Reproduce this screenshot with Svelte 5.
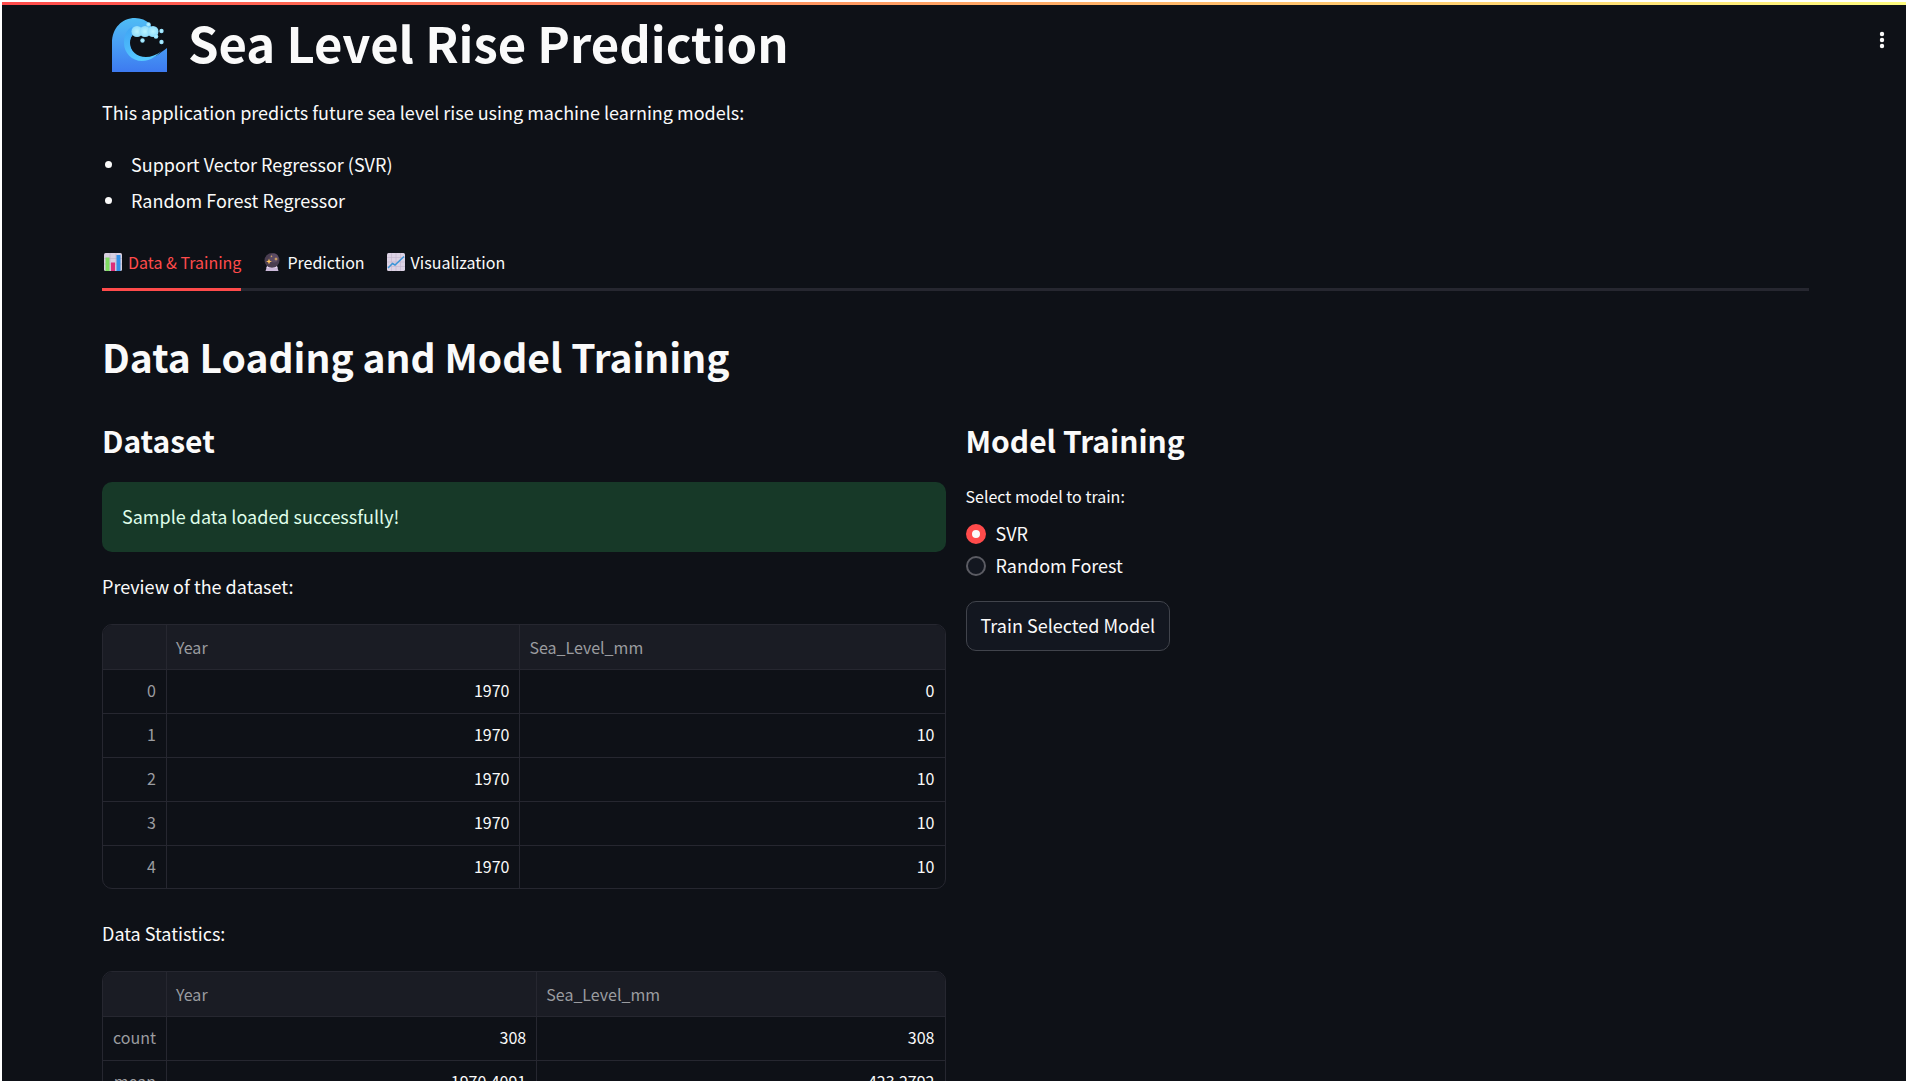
<script>
  const tabs = ['Data & Training', 'Prediction', 'Visualization'];
  let active = $state(0);
  let model = $state('SVR');
  const models = ['SVR', 'Random Forest'];
  const preview = [
    ['0', '1970', '0'],
    ['1', '1970', '10'],
    ['2', '1970', '10'],
    ['3', '1970', '10'],
    ['4', '1970', '10']
  ];
  const stats = [
    ['count', '308', '308'],
    ['mean', '1970.4091', '423.2792']
  ];
</script>

{#snippet grid(rows, kind, label)}
  <div class="frame">
    <table class={kind} aria-label={label}>
      <thead>
        <tr><th class="idx"></th><th class="year" scope="col">Year</th><th scope="col">Sea_Level_mm</th></tr>
      </thead>
      <tbody>
        {#each rows as row}
          <tr><th class="idx" scope="row">{row[0]}</th><td>{row[1]}</td><td>{row[2]}</td></tr>
        {/each}
      </tbody>
    </table>
  </div>
{/snippet}

<div class="app">
  <div class="decoration"></div>
  <button class="menu" aria-label="Main menu">
    <svg viewBox="0 0 6 18" width="6" height="18"><circle cx="3" cy="3" r="2.2" /><circle cx="3" cy="9" r="2.2" /><circle cx="3" cy="15" r="2.2" /></svg>
  </button>
  <main>
    <h1>
      <svg class="wave" viewBox="0 0 55 54" width="55" height="54" aria-hidden="true">
        <defs>
          <linearGradient id="sea" x1="0" y1="0" x2="0" y2="1"><stop offset="0" stop-color="#4fbdf5" /><stop offset="0.5" stop-color="#489df5" /><stop offset="1" stop-color="#3d7af0" /></linearGradient>
          <linearGradient id="curl" x1="0" y1="0" x2="0.3" y2="1"><stop offset="0" stop-color="#3fa4f4" /><stop offset="1" stop-color="#55c8ff" /></linearGradient>
          <radialGradient id="foam"><stop offset="0" stop-color="#b9f3ff" /><stop offset="1" stop-color="#8fdcfb" /></radialGradient>
        </defs>
        <path fill="url(#sea)" d="M0 54V25C0 10 10 0 23 0c6 0 11 2 15 6l4 9-16-2c-6 2-9 8-8 14 1 8 7 14 15 14 9 0 15-6 22-11v24z" />
        <path fill="url(#curl)" d="M20 9c-6 3-8 9-8 16 0 10 8 18 18 18 9 0 15-6 20-10-6 4-11 6-16 6-9 0-16-6-16-14 0-4 1-7 4-9z" />
        <g fill="url(#foam)">
          <circle cx="25" cy="13.500" r="5.500" /><circle cx="33" cy="13.500" r="5.500" /><circle cx="41" cy="13.500" r="5.500" />
          <circle cx="36.500" cy="6.500" r="2.200" /><circle cx="44" cy="18.500" r="2.300" /><circle cx="49.500" cy="13" r="2.200" /><circle cx="49.500" cy="24" r="2.200" /><circle cx="30.500" cy="22.500" r="2.200" />
        </g>
      </svg>
      <span>Sea Level Rise Prediction</span>
    </h1>
    <p>This application predicts future sea level rise using machine learning models:</p>
    <ul>
      <li>Support Vector Regressor (SVR)</li>
      <li>Random Forest Regressor</li>
    </ul>
    <div class="tabs" role="tablist">
      {#each tabs as tab, i}
        <button role="tab" aria-selected={active === i} class:active={active === i} onclick={() => (active = i)}>
          <svg viewBox="0 0 18 18" width="18" height="18" aria-hidden="true">
            {#if i === 0}
              <rect width="18" height="18" rx="1.500" fill="#d8cfe0" />
              <path d="M0 5.500h18M0 11h18M6 0v18M12 0v18" stroke="#bdb0c8" stroke-width=".6" />
              <rect x="1.500" y="4.500" width="4" height="13.500" fill="#7fdc62" />
              <rect x="7" y="9.500" width="4" height="8.500" fill="#dc2f78" />
              <rect x="12.500" y="2" width="4" height="16" fill="#3390e6" />
            {:else if i === 1}
              <path d="M4 13h10l1.500 5h-13z" fill="#cbb9da" />
              <circle cx="9" cy="7.500" r="7.500" fill="#493d50" />
              <circle cx="11" cy="5" r="4.500" fill="#5b4b63" />
              <path d="M4 13.500q5 2.500 10 0l.5 1.500h-11z" fill="#e4d5ef" />
              <path d="M6 5.500l.8 2.200 2.200.8-2.200.8L6 11.500l-.8-2.200L3 8.500l2.200-.8zM13 4l.5 1.400 1.500.6-1.500.6L13 8l-.5-1.400L11 6l1.500-.6zM8.500 2l.3.900.9.300-.9.300-.3.900-.3-.9-.9-.3.900-.3z" fill="#ffc45e" />
            {:else}
              <rect width="18" height="18" rx="1.500" fill="#dcd2e4" />
              <path d="M0 4.500h18M0 9h18M0 13.500h18M4.500 0v18M9 0v18M13.500 0v18" stroke="#c3b6cf" stroke-width=".6" />
              <path d="M1 15l4.500-4.500L8 12l9-8.500" fill="none" stroke="#3c95d8" stroke-width="1.500" />
            {/if}
          </svg>
          {tab}
        </button>
      {/each}
    </div>
    <h2>Data Loading and Model Training</h2>
    <div class="columns">
      <section>
        <h3>Dataset</h3>
        <div class="alert" role="status">Sample data loaded successfully!</div>
        <p class="caption">Preview of the dataset:</p>
        {@render grid(preview, 'preview', 'Preview of the dataset')}
        <p class="caption second">Data Statistics:</p>
        {@render grid(stats, 'stats', 'Data Statistics')}
      </section>
      <section>
        <h3>Model Training</h3>
        <fieldset>
          <legend>Select model to train:</legend>
          {#each models as name}
            <label><input type="radio" name="model" value={name} bind:group={model} /><span>{name}</span></label>
          {/each}
        </fieldset>
        <button class="train">Train Selected Model</button>
      </section>
    </div>
  </main>
</div>

<style>
  :global(body) { background: #fff; }
  .app {
    box-sizing: border-box;
    height: 100vh;
    border: 2px solid #fff;
    overflow: hidden;
    position: relative;
    background: #0e1117;
    color: #fafafa;
    font: 18px/32px "Noto Sans CJK SC", "Noto Sans", sans-serif;
  }
  .decoration { height: 3px; background: linear-gradient(90deg, #ff4b4b, #fffd80); }
  .menu {
    position: absolute;
    top: 29px;
    right: 21px;
    padding: 0;
    border: 0;
    background: none;
    display: flex;
  }
  .menu svg { fill: #fafafa; }
  main { padding: 0 97px 0 100px; }
  h1, h2, h3, p, ul { margin: 0; }
  h1 {
    display: flex;
    align-items: center;
    gap: 21px;
    padding: 5px 0 0 10px;
    font-size: 49px;
    line-height: 64px;
    font-weight: 700;
  }
  h1 span { padding-bottom: 6px; }
  p { padding-top: 16px; }
  ul { padding: 18px 0 0; line-height: 36px; list-style: none; }
  li { display: flex; align-items: center; gap: 19px; padding-left: 3px; }
  li::before { content: ""; width: 7px; height: 7px; border-radius: 50%; background: #fafafa; }
  .tabs {
    display: flex;
    gap: 20px;
    margin-top: 20px;
    border-bottom: 3px solid #262730;
  }
  .tabs button {
    box-sizing: border-box;
    display: flex;
    align-items: center;
    gap: 6px;
    height: 53px;
    margin-bottom: -3px;
    padding: 0 0 2px 2px;
    border: 0;
    border-bottom: 3px solid transparent;
    background: none;
    color: inherit;
    font: inherit;
    font-size: 16px;
  }
  .tabs button.active { color: #ff4b4b; border-color: #ff4b4b; }
  h2 { margin-top: 38px; font-size: 39px; line-height: 54px; font-weight: 600; }
  .columns { display: grid; grid-template-columns: 1fr 1fr; gap: 20px; margin-top: 36px; }
  h3 { font-size: 30px; line-height: 42px; font-weight: 600; }
  .alert {
    margin-top: 21px;
    padding: 18px 20px 20px;
    border-radius: 10px;
    background: #173928;
    color: #dffde9;
  }
  .caption { padding-top: 18px; }
  .second { padding-top: 28px; }
  .frame {
    margin-top: 22px;
    border: 1px solid #262730;
    border-radius: 10px;
    overflow: hidden;
  }
  table { width: 100%; border-collapse: separate; border-spacing: 0; table-layout: fixed; font-size: 16px; line-height: 24px; }
  th, td {
    box-sizing: border-box;
    height: 44px;
    padding: 0 10px 3px;
    border-right: 1px solid #262730;
    border-bottom: 1px solid #262730;
    text-align: right;
    font-weight: 400;
  }
  th { color: #9b9ca0; }
  th:last-child, td:last-child { border-right: 0; }
  .preview tbody tr:last-child > * { height: 42px; border-bottom: 0; }
  thead th { height: 45px; padding: 0 9px 1px; background: #1a1c24; text-align: left; }
  .idx { width: 64px; }
  .preview .year { width: 42%; }
  .stats .year { width: 44%; }
  fieldset { margin: 0; padding: 0; border: 0; }
  legend { padding: 20px 0 7px; font-size: 16px; line-height: 30px; }
  label { display: flex; align-items: center; gap: 10px; height: 32px; }
  label span { padding-bottom: 2px; }
  input {
    appearance: none;
    box-sizing: border-box;
    width: 20px;
    height: 20px;
    margin: 0;
    border: 2px solid #5b5c63;
    border-radius: 50%;
    background: #131720;
  }
  input:checked { border: 6px solid #ff4b4b; background: #fafafa; }
  .train {
    height: 50px;
    margin-top: 19px;
    padding: 0 14px 2px;
    border: 1px solid #41444c;
    border-radius: 10px;
    background: #131720;
    color: inherit;
    font: inherit;
  }
</style>
